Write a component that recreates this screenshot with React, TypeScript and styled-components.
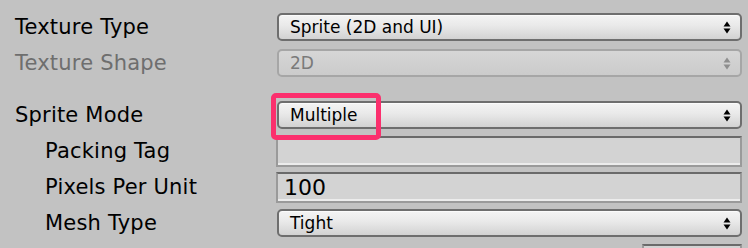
import React from 'react';
import styled, { createGlobalStyle } from 'styled-components';

const GlobalStyle = createGlobalStyle`
  html, body {
    margin: 0;
    padding: 0;
    background: #c2c2c2;
    overflow: hidden;
  }
  body {
    font-family: "DejaVu Sans", "Liberation Sans", sans-serif;
  }
`;

const Inspector = styled.div`
  width: 748px;
  height: 248px;
  padding-top: 9px;
  box-sizing: border-box;
  background: #c2c2c2;
  overflow: hidden;
`;

const Row = styled.div<{ $gap?: boolean }>`
  display: grid;
  grid-template-columns: 277px 1fr;
  align-items: center;
  height: 36px;
  padding-right: 6px;
  margin-top: ${(p) => (p.$gap ? '16px' : '0')};
`;

const Label = styled.div<{ $indent?: boolean; $disabled?: boolean }>`
  padding-left: ${(p) => (p.$indent ? '45px' : '15px')};
  font-size: 21px;
  letter-spacing: 0.2px;
  color: ${(p) => (p.$disabled ? '#6e6e6e' : '#000')};
  white-space: nowrap;
`;

const Control = styled.div`
  position: relative;
  display: flex;
  align-items: center;
`;

const Dropdown = styled.div<{ $disabled?: boolean }>`
  flex: 1;
  height: 28px;
  box-sizing: border-box;
  display: flex;
  align-items: center;
  justify-content: space-between;
  padding: 0 9px 0 11px;
  border-radius: 5px;
  border: 2px solid ${(p) => (p.$disabled ? '#a6a6a6' : '#6e6e6e')};
  background: ${(p) =>
    p.$disabled
      ? 'linear-gradient(#d6d6d6, #cbcbcb)'
      : 'linear-gradient(#f4f4f4 0%, #e9e9e9 45%, #d2d2d2 100%)'};
  color: ${(p) => (p.$disabled ? '#7a7a7a' : '#000')};
  font-size: 17px;
  box-shadow: ${(p) => (p.$disabled ? 'none' : 'inset 0 1px 0 #fbfbfb')};
`;

const Field = styled.div`
  flex: 1;
  height: 31px;
  box-sizing: border-box;
  display: flex;
  align-items: center;
  padding: 1px 6px 0;
  margin-left: -1px;
  background: #d3d3d3;
  border-top: 2.5px solid #6a6a6a;
  border-left: 2px solid #9a9a9a;
  border-right: 2px solid #9a9a9a;
  border-bottom: 2px solid #9a9a9a;
  box-shadow: inset 0 -2px 0 #ececec;
  font-size: 22px;
  color: #000;
`;

const StubRow = styled.div`
  display: flex;
  justify-content: flex-end;
  padding: 3px 6px 0 0;
`;

const Stub = styled.div`
  width: 100px;
  height: 20px;
  box-sizing: border-box;
  background: #d3d3d3;
  border-top: 2.5px solid #6a6a6a;
  border-left: 2px solid #9a9a9a;
  border-right: 2px solid #9a9a9a;
`;

const Highlight = styled.div`
  position: absolute;
  z-index: 5;
  left: -6px;
  top: -8px;
  width: 110px;
  height: 47px;
  box-sizing: border-box;
  border: 5.5px solid #fb2f6d;
  border-radius: 5px;
  pointer-events: none;
`;

const Arrows = ({ color }: { color: string }) => (
  <svg width="8" height="13" viewBox="0 0 8 13">
    <polygon points="4,0.5 7.5,5.5 0.5,5.5" fill={color} />
    <polygon points="0.5,7.5 7.5,7.5 4,12.5" fill={color} />
  </svg>
);

type DropProps = { value: string; disabled?: boolean };

const Select = ({ value, disabled }: DropProps) => (
  <Dropdown $disabled={disabled}>
    <span>{value}</span>
    <Arrows color={disabled ? '#8e8e8e' : '#000'} />
  </Dropdown>
);

export default function App() {
  return (
    <Inspector>
      <GlobalStyle />
      <Row>
        <Label>Texture Type</Label>
        <Control>
          <Select value="Sprite (2D and UI)" />
        </Control>
      </Row>
      <Row>
        <Label $disabled>Texture Shape</Label>
        <Control>
          <Select value="2D" disabled />
        </Control>
      </Row>
      <Row $gap>
        <Label>Sprite Mode</Label>
        <Control>
          <Select value="Multiple" />
          <Highlight />
        </Control>
      </Row>
      <Row>
        <Label $indent>Packing Tag</Label>
        <Control>
          <Field />
        </Control>
      </Row>
      <Row>
        <Label $indent>Pixels Per Unit</Label>
        <Control>
          <Field>100</Field>
        </Control>
      </Row>
      <Row>
        <Label $indent>Mesh Type</Label>
        <Control>
          <Select value="Tight" />
        </Control>
      </Row>
      <StubRow>
        <Stub />
      </StubRow>
    </Inspector>
  );
}
